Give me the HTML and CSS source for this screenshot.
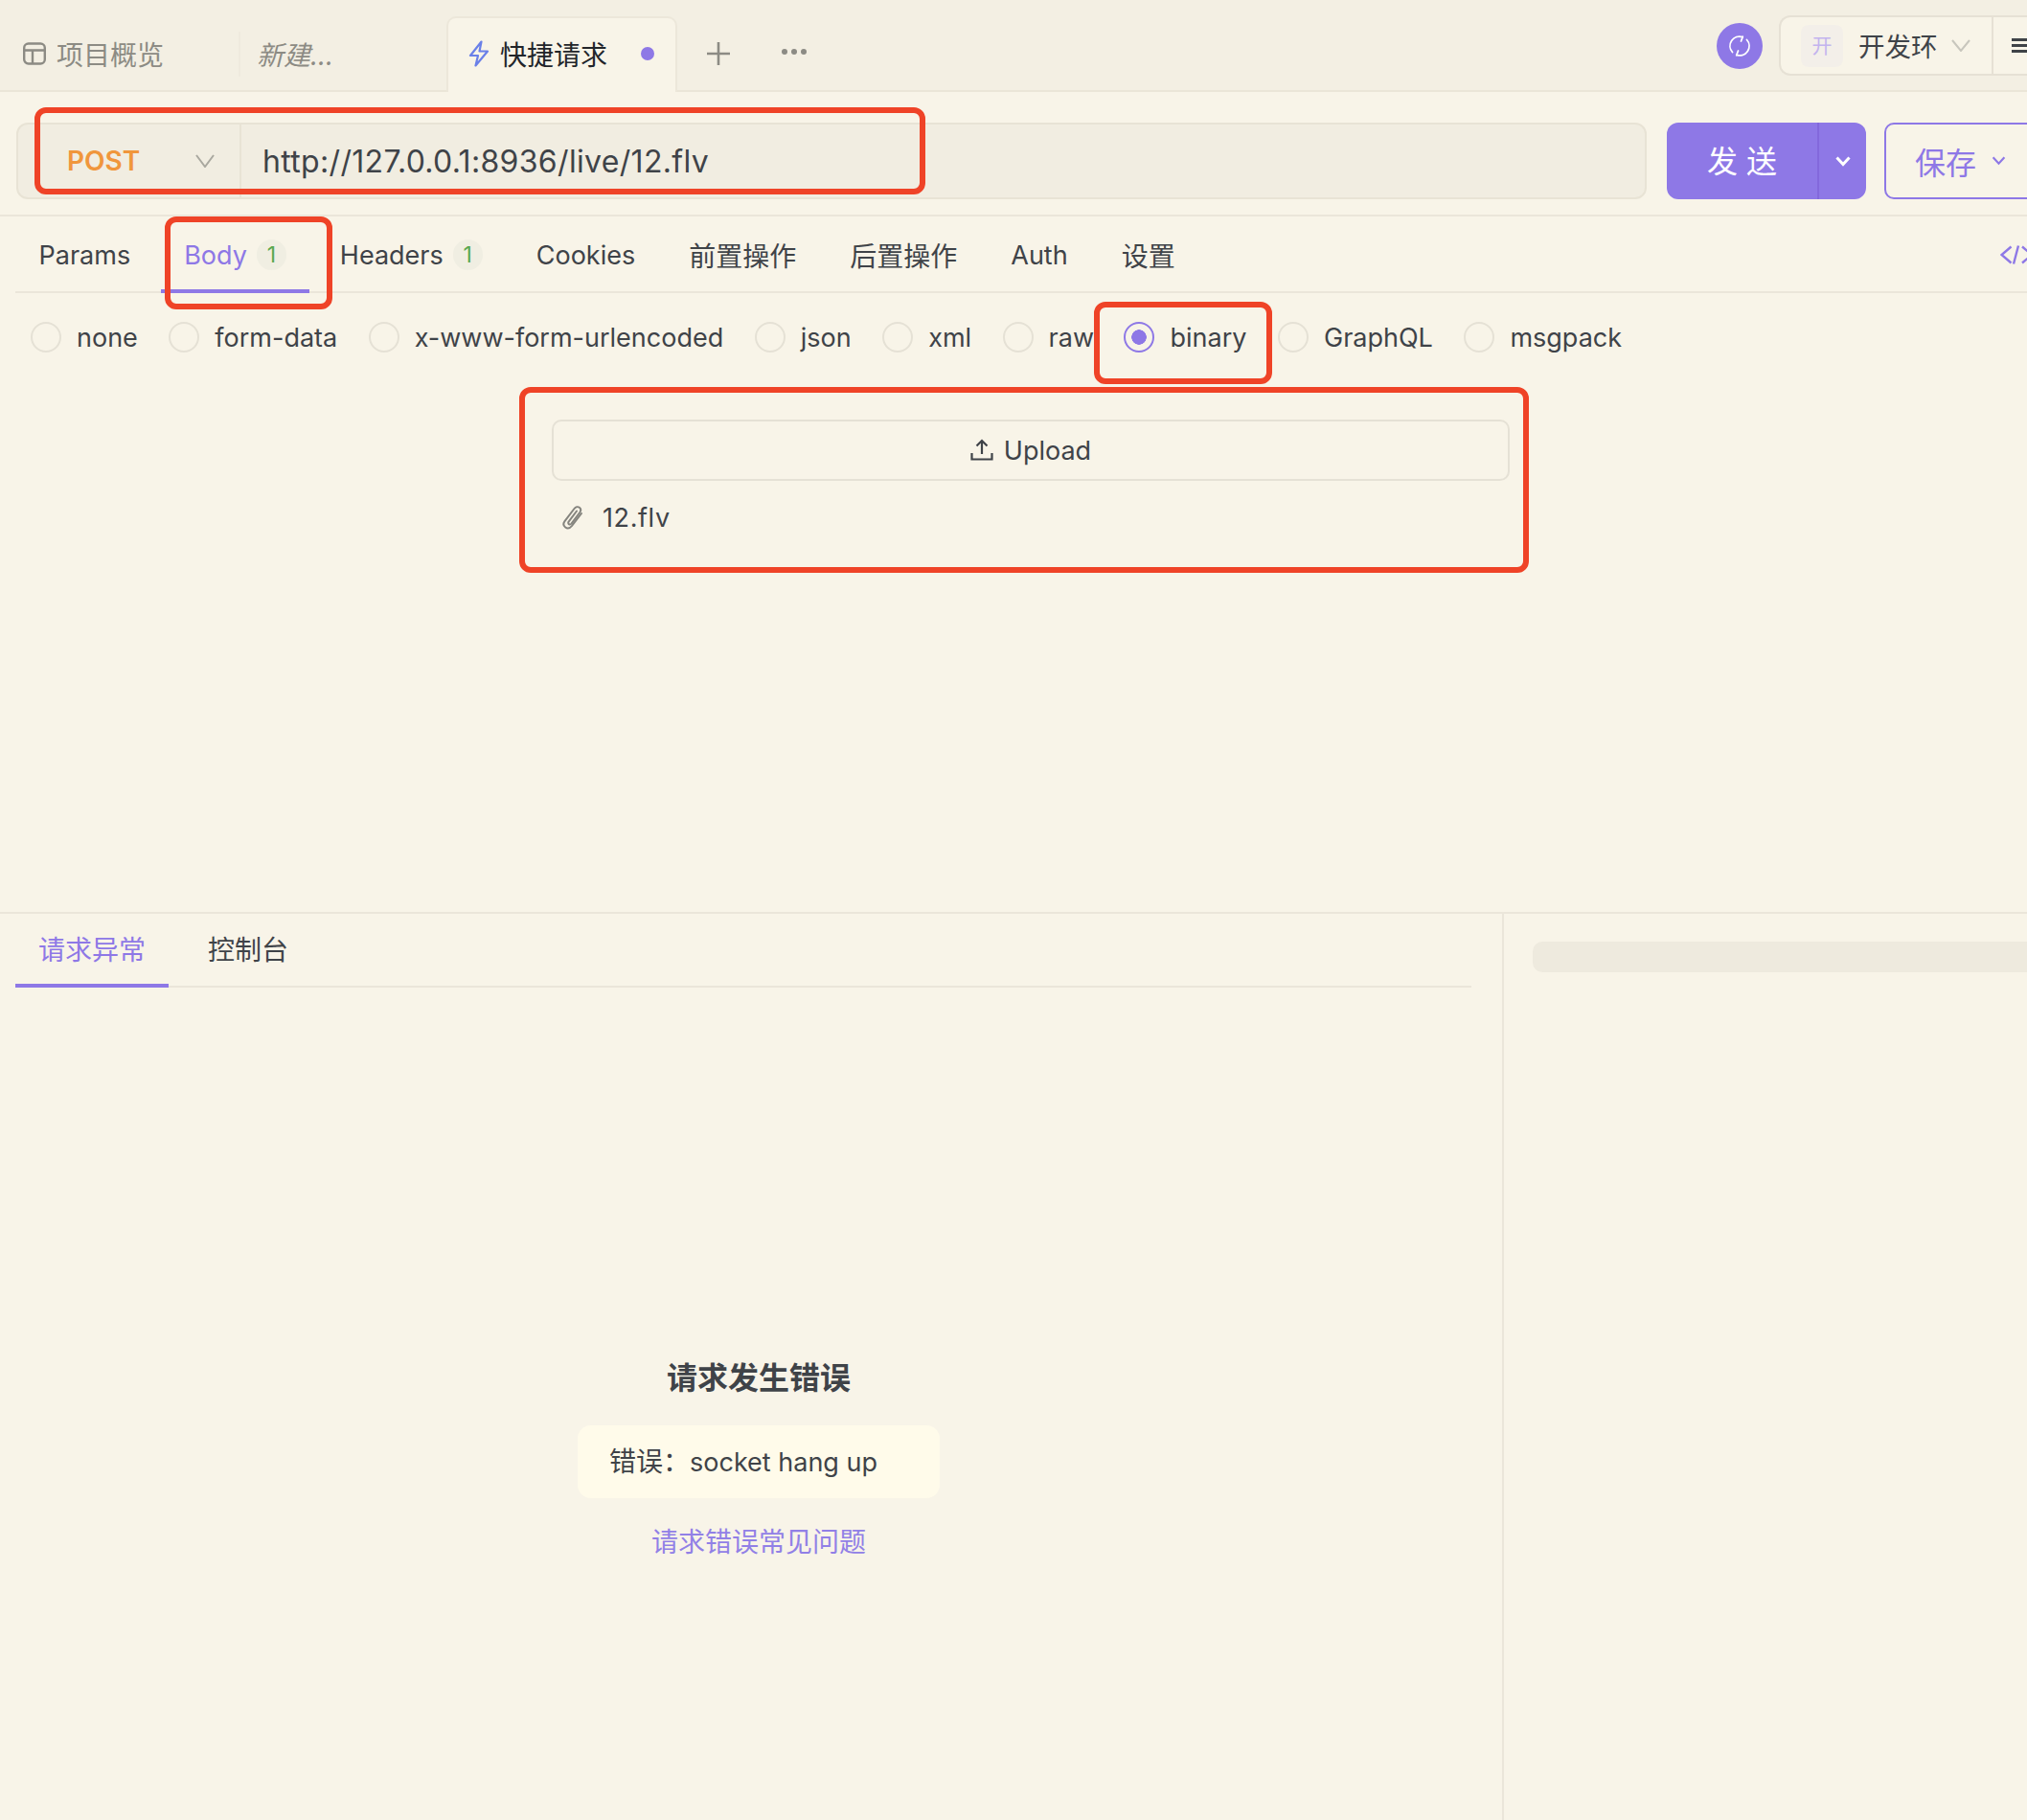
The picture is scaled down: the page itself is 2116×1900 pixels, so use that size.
FILE: index.html
```html
<!DOCTYPE html>
<html lang="zh-CN">
<head>
    <meta charset="UTF-8">
    <title>快捷请求</title>
    <link rel="stylesheet" href="styles.css">
</head>
<body>
<div class="page">
    <!-- 상단 탭 -->
    <header class="hd">
        <div class="tab t-over">
            <svg class="ic-over" viewBox="0 0 24 24" fill="none" stroke="#8c8b84" stroke-width="2.400"><rect x="1.200" y="1.500" width="21.600" height="21" rx="4.500"/><path d="M1.200 8.500h21.600M10 8.500v14"/></svg>
            <span>项目概览</span>
        </div>
        <div class="tab t-new"><em>新建...</em></div>
        <div class="tab t-on">
            <svg class="ic-bolt" viewBox="0 0 24 28" fill="none" stroke="#6a80e8" stroke-width="2.2" stroke-linejoin="round"><path d="M14.500 1.500 3 16h8l-2.500 10.500L21 11.500h-8.500z"/></svg>
            <span class="t-name">快捷请求</span>
            <i class="dot"></i>
        </div>
        <svg class="ic-plus" viewBox="0 0 24 24" stroke="#8c8b84" stroke-width="2.6"><path d="M12 0v24M0 12h24"/></svg>
        <div class="more"><i></i><i></i><i></i></div>

        <div class="hd-r">
            <div class="sync">
                <svg viewBox="0 0 24 24" fill="none" stroke="#fff" stroke-width="1.800" stroke-linecap="round"><path d="M4.500 18.500A9.800 9.800 0 0 1 15 2.700M19.500 5.500A9.800 9.800 0 0 1 9 21.300"/><path d="M15.300 2.300 13.500 7M8.700 21.700 10.500 17"/></svg>
            </div>
            <div class="env">
                <div class="env-sel">
                    <span class="env-ic">开</span>
                    <span class="env-name">开发环</span>
                    <svg class="env-arr" viewBox="0 0 20 13" fill="none" stroke="#c8c6bd" stroke-width="2"><path d="M1 1l9 11 9-11"/></svg>
                </div>
                <svg class="ic-menu" viewBox="0 0 16 15" fill="#3f4348"><rect width="16" height="3"/><rect y="6" width="16" height="3"/><rect y="12" width="16" height="3"/></svg>
            </div>
        </div>
    </header>

    <!-- 주소 입력줄 -->
    <section class="bar">
        <div class="url">
            <div class="method">
                <b>POST</b>
                <svg viewBox="0 0 20 14" fill="none" stroke="#a9a89f" stroke-width="2"><path d="M1 1l9 12 9-12"/></svg>
            </div>
            <div class="addr">http://127.0.0.1:8936/live/12.flv</div>
        </div>
        <div class="send">
            <span class="send-t">发 送</span>
            <span class="send-m"><svg viewBox="0 0 16 11" fill="none" stroke="#fff" stroke-width="3"><path d="M1.500 1.500 8 8.500l6.500-7"/></svg></span>
        </div>
        <div class="save">
            <span>保存</span>
            <svg viewBox="0 0 16 11" fill="none" stroke="#8e78e6" stroke-width="2.400"><path d="M1.500 1.500 8 8.500l6.500-7"/></svg>
        </div>
    </section>

    <section class="req">
        <nav class="tabs">
            <a class="ti">Params</a>
            <a class="ti on">Body<span class="bdg">1</span></a>
            <a class="ti">Headers<span class="bdg">1</span></a>
            <a class="ti">Cookies</a>
            <a class="ti zh">前置操作</a>
            <a class="ti zh">后置操作</a>
            <a class="ti">Auth</a>
            <a class="ti zh">设置</a>
            <svg class="ic-code" viewBox="0 0 36 20" fill="none" stroke="#8e78e6" stroke-width="2.400"><path d="M11.500 1.500 1.500 10l10 8.500M14 19.500l5-19M23 1.500 33 10l-10 8.500"/></svg>
        </nav>

        <div class="radios">
            <label class="rd"><i></i>none</label>
            <label class="rd"><i></i>form-data</label>
            <label class="rd"><i></i>x-www-form-urlencoded</label>
            <label class="rd"><i></i>json</label>
            <label class="rd"><i></i>xml</label>
            <label class="rd"><i></i>raw</label>
            <label class="rd sel"><i></i>binary</label>
            <label class="rd"><i></i>GraphQL</label>
            <label class="rd"><i></i>msgpack</label>
        </div>

        <div class="upl">
            <div class="upl-btn">
                <svg viewBox="0 0 24 23" fill="none" stroke="#3f4348" stroke-width="2.200"><path d="M12 16V2M6.500 7.500 12 2l5.500 5.500M1.500 15v6.500h21V15"/></svg>
                <span>Upload</span>
            </div>
            <div class="file">
                <svg viewBox="0 0 22 25" fill="none" stroke="#85847e" stroke-width="2" stroke-linecap="round" stroke-linejoin="round"><path d="M20 8 10 21c-2 2.500-4.800 3-6.800 1.500S.8 18.500 2.500 16.200L12.500 3c1.500-2 3.800-2.300 5.300-1.200s1.800 3.200.4 5.200L9.500 18.500c-.8 1-1.900 1.200-2.700.6s-.8-1.800 0-2.800L15 5.500"/></svg>
                <span>12.flv</span>
            </div>
        </div>
    </section>

    <section class="low">
        <div class="low-l">
            <nav class="ltabs">
                <a class="lt on">请求异常</a>
                <a class="lt">控制台</a>
            </nav>
            <div class="err">
                <h3>请求发生错误</h3>
                <div class="err-box"><span class="zh-s">错误：</span>socket hang up</div>
                <a class="err-link">请求错误常见问题</a>
            </div>
        </div>
        <div class="low-r"><div class="ph"></div></div>
    </section>

    <!-- 빨간 표시 박스 -->
    <div class="mark m1"></div>
    <div class="mark m2"></div>
    <div class="mark m3"></div>
    <div class="mark m4"></div>
</div>
</body>
</html>
```

FILE: styles.css
```css
*{
    box-sizing: border-box;
}
body{
    margin: 0;
    background-color: #f8f4e8;
    color: #3f4348;
    font-family: Inter, "Noto Sans CJK SC", sans-serif;
    font-size: 27px;
}
svg{
    display: block;
    flex: none;
}
.page{
    position: relative;
    width: 2116px;
    height: 1900px;
    overflow: hidden;
}

/* 상단 탭 */
.hd{
    display: flex;
    align-items: center;
    height: 96px;
    padding-top: 17px;
    background-color: #f3efe3;
    border-bottom: 2px solid #ebe6d8;
}
.tab{
    display: flex;
    flex: none;
    align-items: center;
    height: 79px;
    margin-bottom: -2px;
    padding-bottom: 2px;
    font-size: 28px;
}
.t-over{
    width: 249px;
    padding-left: 24px;
    color: #8c8b84;
}
.ic-over{
    width: 24px;
    height: 24px;
    margin-right: 11px;
}
.t-new{
    position: relative;
    width: 217px;
    padding-left: 19px;
    color: #8c8b84;
}
.t-new::before{
    content: "";
    position: absolute;
    top: 16px;
    left: 0;
    width: 2px;
    height: 47px;
    background-color: #efeade;
}
.t-on{
    width: 241px;
    padding: 0 0 4px 20px;
    background-color: #f8f4e8;
    border: 2px solid #ece7da;
    border-bottom: none;
    border-radius: 10px 10px 0 0;
}
.ic-bolt{
    width: 24px;
    height: 28px;
    margin-right: 10px;
}
.t-name{
    color: #22252a;
}
.dot{
    width: 14px;
    height: 14px;
    margin-left: 35px;
    border-radius: 50%;
    background-color: #8e78e6;
}
.ic-plus{
    width: 24px;
    height: 24px;
    margin-left: 31px;
}
.more{
    display: flex;
    gap: 4px;
    margin: -4px 0 0 54px;
}
.more i{
    width: 6px;
    height: 6px;
    border-radius: 50%;
    background-color: #8c8b84;
}
.hd-r{
    display: flex;
    align-items: center;
    gap: 17px;
    align-self: flex-start;
    margin: -1px 0 0 auto;
}
.sync{
    display: flex;
    align-items: center;
    justify-content: center;
    width: 48px;
    height: 48px;
    border-radius: 50%;
    background-color: #8e78e6;
}
.sync svg{
    width: 24px;
    height: 24px;
}
.env{
    display: flex;
    align-items: center;
    width: 259px;
    height: 63px;
    background-color: #f8f4e8;
    border: 2px solid #e6e1d5;
    border-right: none;
    border-radius: 12px 0 0 12px;
}
.env-sel{
    display: flex;
    align-items: center;
    flex: none;
    width: 222px;
    height: 100%;
    padding-left: 21px;
    border-right: 2px solid #e6e1d5;
}
.env-ic{
    width: 44px;
    height: 44px;
    margin-right: 16px;
    border-radius: 8px;
    background-color: #f3efe9;
    color: #c3b4ee;
    font-size: 21px;
    line-height: 44px;
    text-align: center;
}
.env-name{
    margin-top: -2px;
    font-size: 27.500px;
}
.env-arr{
    width: 20px;
    height: 13px;
    margin-left: 14px;
}
.ic-menu{
    width: 16px;
    height: 15px;
    margin-left: 19px;
}

/* 주소 입력줄 */
.bar{
    display: flex;
    height: 130px;
    padding: 32px 0 16px 17px;
    border-bottom: 2px solid #ebe6da;
}
.url{
    display: flex;
    flex: none;
    width: 1702px;
    height: 80px;
    background-color: #f1ede1;
    border: 2px solid #e8e3d5;
    border-radius: 12px;
}
.method{
    display: flex;
    align-items: center;
    justify-content: space-between;
    width: 233px;
    padding: 0 26px 0 51px;
    border-right: 2px solid #e8e3d5;
}
.method b{
    color: #f0963c;
    font-size: 28px;
    font-weight: 600;
}
.method svg{
    width: 20px;
    height: 14px;
}
.addr{
    padding-left: 22px;
    font-size: 32px;
    letter-spacing: .33px;
    line-height: 78px;
}
.send{
    display: flex;
    flex: none;
    width: 208px;
    height: 80px;
    margin-left: 21px;
    border-radius: 12px;
    background-color: #8e78e6;
    color: #fff;
}
.send-t{
    width: 159px;
    border-right: 2px solid #8368dc;
    font-size: 32px;
    line-height: 81px;
    text-align: center;
}
.send-m{
    display: flex;
    flex: 1;
    align-items: center;
    justify-content: center;
}
.send-m svg{
    width: 16px;
    height: 11px;
}
.save{
    display: flex;
    flex: none;
    align-items: center;
    width: 180px;
    height: 80px;
    margin-left: 19px;
    padding-left: 30px;
    border: 2px solid #8e78e6;
    border-radius: 10px 0 0 10px;
    color: #8e78e6;
    font-size: 32px;
}
.save svg{
    width: 15px;
    height: 10px;
    margin-left: 16px;
}

/* 요청 영역 */
.req{
    height: 726px;
}
.tabs{
    display: flex;
    gap: 7px;
    height: 80px;
    margin-left: 16px;
    border-bottom: 2px solid #ebe6da;
}
.ti{
    display: flex;
    align-items: center;
    height: 80px;
    padding: 0 24.500px;
    white-space: nowrap;
}
.ti.zh{
    font-size: 28px;
}
.ti.on{
    box-shadow: inset 0 -4px 0 #8e78e6;
    color: #8e78e6;
}
.bdg{
    width: 31px;
    height: 32px;
    margin-left: 10px;
    border-radius: 16px;
    background-color: #f0eee2;
    color: #5aa84f;
    font-size: 23px;
    line-height: 32px;
    text-align: center;
}
.ic-code{
    width: 36px;
    height: 20px;
    margin: 30px -8px 0 auto;
}
.radios{
    display: flex;
    gap: 32.500px;
    padding: 30px 0 0 32px;
}
.rd{
    display: flex;
    align-items: center;
    gap: 16px;
    height: 32px;
}
.rd i{
    width: 32px;
    height: 32px;
    border: 2px solid #e5e1d5;
    border-radius: 50%;
}
.rd.sel{
    gap: 17px;
    margin-left: -2px;
}
.rd.sel i{
    border-color: #8e78e6;
    background: radial-gradient(circle, #8e78e6 0 7.500px, transparent 8px);
}
.upl{
    width: 1000px;
    margin: 70px 0 0 576px;
}
.upl-btn{
    display: flex;
    align-items: center;
    justify-content: center;
    gap: 11px;
    height: 64px;
    border: 2px solid #e5e1d5;
    border-radius: 10px;
}
.upl-btn svg{
    width: 24px;
    height: 23px;
    margin-top: -2px;
}
.file{
    display: flex;
    align-items: center;
    gap: 20px;
    height: 40px;
    margin-top: 18px;
    padding-left: 11px;
    letter-spacing: .6px;
}
.file svg{
    width: 22px;
    height: 25px;
}

/* 하단 영역 */
.low{
    display: flex;
    height: 948px;
    border-top: 2px solid #ebe6da;
}
.low-l{
    width: 1570px;
    padding-left: 16px;
    border-right: 2px solid #ebe6da;
}
.ltabs{
    display: flex;
    gap: 17px;
    width: 1520px;
    height: 77px;
    border-bottom: 2px solid #ebe6da;
    font-size: 28px;
}
.lt{
    height: 77px;
    padding: 0 24px;
    line-height: 76px;
}
.lt.on{
    box-shadow: inset 0 -4px 0 #8e78e6;
    color: #8e78e6;
}
.err{
    display: flex;
    flex-direction: column;
    align-items: center;
    padding-top: 388px;
}
.err h3{
    margin: 0;
    font-size: 32px;
    font-weight: 600;
    line-height: 40px;
}
.err-box{
    width: 378px;
    height: 76px;
    margin-top: 29px;
    padding-left: 33px;
    border-radius: 14px;
    background-color: #fffbea;
    line-height: 76px;
}
.zh-s{
    font-size: 28px;
}
.err-link{
    margin-top: 26px;
    color: #9180e6;
    font-size: 28px;
    line-height: 40px;
}
.low-r{
    flex: 1;
    padding: 29px 0 0 30px;
}
.ph{
    height: 32px;
    border-radius: 10px 0 0 10px;
    background-color: #eeeade;
}

/* 빨간 표시 박스 */
.mark{
    position: absolute;
    border: 6px solid #ef4327;
    border-radius: 12px;
}
.m1{
    top: 112px;
    left: 36px;
    width: 930px;
    height: 91px;
}
.m2{
    top: 226px;
    left: 172px;
    width: 175px;
    height: 97px;
}
.m3{
    top: 315px;
    left: 1142px;
    width: 186px;
    height: 86px;
}
.m4{
    top: 404px;
    left: 542px;
    width: 1054px;
    height: 194px;
}
```
